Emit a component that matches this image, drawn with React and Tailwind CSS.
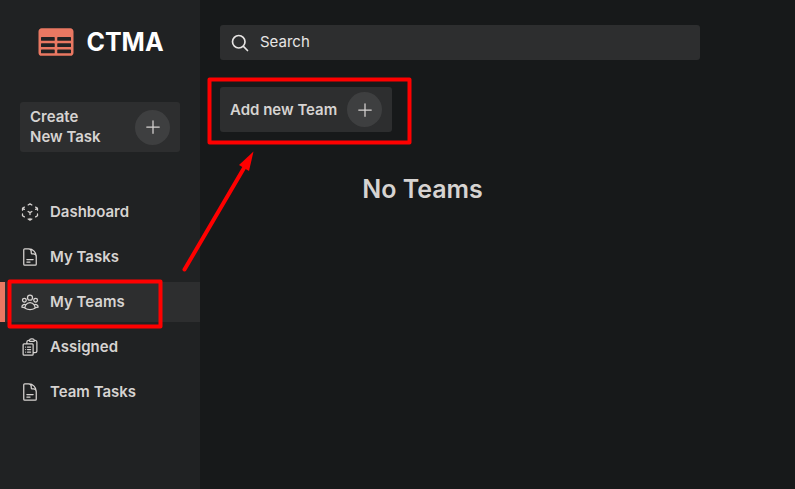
import {
  HiTableCells,
  HiOutlineCubeTransparent,
  HiOutlineDocumentText,
  HiOutlineUserGroup,
  HiOutlineClipboardDocumentList,
  HiOutlineMagnifyingGlass,
  HiOutlinePlus,
} from "react-icons/hi2";

const links = [
  { label: "Dashboard", Icon: HiOutlineCubeTransparent },
  { label: "My Tasks", Icon: HiOutlineDocumentText },
  { label: "My Teams", Icon: HiOutlineUserGroup, active: true },
  { label: "Assigned", Icon: HiOutlineClipboardDocumentList },
  { label: "Team Tasks", Icon: HiOutlineDocumentText },
];

function PlusBadge() {
  return (
    <span className="flex size-[35px] shrink-0 items-center justify-center rounded-full bg-[#3e3f40]">
      <HiOutlinePlus className="size-5" aria-hidden="true" />
    </span>
  );
}

function Sidebar() {
  return (
    <aside className="w-[200px] shrink-0 bg-[#202223]">
      <div className="flex items-center justify-center gap-2.5 pt-[22px]">
        <HiTableCells className="size-10 text-[#e97862]" aria-hidden="true" />
        <h1 className="text-[25px] leading-10 font-bold text-white">CTMA</h1>
      </div>
      <div className="px-5 pt-10">
        <button
          type="button"
          className="flex h-[50px] w-full items-center justify-between rounded-[3px] bg-[#2d2e2f] px-2.5 text-left text-[15px] leading-5 font-semibold"
        >
          <span>
            Create
            <br />
            New Task
          </span>
          <PlusBadge />
        </button>
      </div>
      <nav className="flex flex-col gap-[5px] pt-10">
        {links.map(({ label, Icon, active }) => (
          <a
            key={label}
            href="#"
            aria-current={active ? "page" : undefined}
            className={
              active
                ? "flex h-10 items-center gap-2.5 border-l-[5px] border-[#e97862] bg-[#2d2e2f] pl-[15px] text-[15px] font-semibold"
                : "flex h-10 items-center gap-2.5 border-l-[5px] border-transparent pl-[15px] text-[15px] font-semibold"
            }
          >
            <Icon className="size-5" aria-hidden="true" />
            {label}
          </a>
        ))}
      </nav>
    </aside>
  );
}

function Annotations() {
  return (
    <svg
      className="pointer-events-none absolute top-0 left-0"
      width="420"
      height="340"
      fill="none"
      stroke="#ff0000"
      strokeWidth="4"
      strokeLinejoin="round"
      strokeLinecap="round"
      aria-hidden="true"
    >
      <rect x="209.500" y="79.500" width="200" height="63" />
      <rect x="9.500" y="281.500" width="151" height="45" />
      <path d="M184.500 269.500L244 168" />
      <path d="M253.500 151.500L249 171L239 165Z" fill="#ff0000" stroke="none" />
    </svg>
  );
}

export default function App() {
  return (
    <div className="relative flex min-h-screen bg-[#17191a] font-['Inter',sans-serif] text-[#d6d3d1]">
      <Sidebar />
      <main className="min-w-0 flex-1 px-5 pt-[25px]">
        <label className="flex h-[35px] max-w-[480px] items-center gap-2.5 rounded-[3px] bg-[#2d2e2f] px-2.5">
          <HiOutlineMagnifyingGlass
            className="size-5 stroke-2 text-[#e7e5e4]"
            aria-hidden="true"
          />
          <input
            type="search"
            aria-label="Search"
            placeholder="Search"
            className="min-w-0 flex-1 bg-transparent text-[15px] outline-none placeholder:text-[#e7e5e4]"
          />
        </label>
        <button
          type="button"
          className="mt-[27px] flex h-[45px] items-center gap-2.5 rounded-[3px] bg-[#2d2e2f] px-2.5 text-[15px] leading-5 font-semibold"
        >
          Add new Team
          <PlusBadge />
        </button>
        <h2 className="mt-10 max-w-[405px] text-center text-[25px] leading-[34px] font-semibold">
          No Teams
        </h2>
      </main>
      <Annotations />
    </div>
  );
}
